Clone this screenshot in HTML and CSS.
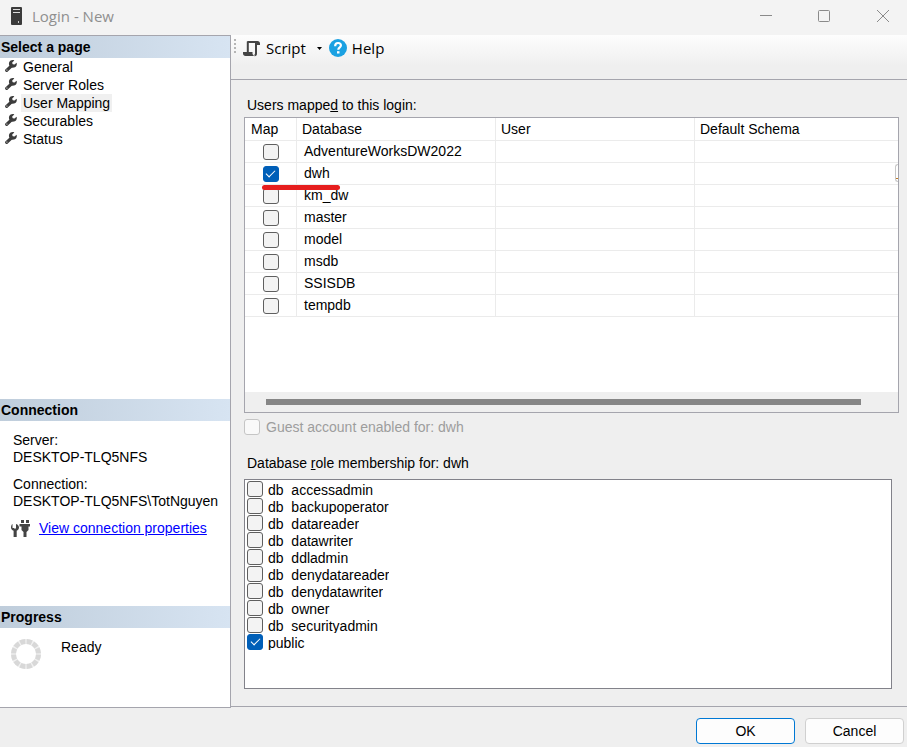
FILE: index.html
```html
<!DOCTYPE html>
<html lang="en">
<head>
<meta charset="utf-8">
<title>Login - New</title>
<link rel="stylesheet" href="styles.css">
</head>
<body>
<svg class="defs" width="0" height="0" aria-hidden="true">
  <symbol id="wrench" viewBox="0 0 12 12">
    <path d="M1.700 10.300 6.500 5.800" stroke="#3c3c3c" stroke-width="3.200" stroke-linecap="round"/>
    <path fill="#3c3c3c" d="M11.600 2.800 9.500 4.600 7.600 4.200 7.200 2.500 9.300.4C7.300-.4 5 .5 4.200 2.300 3.600 4 4 5.700 5.200 6.800c1.200 1.100 3.200 1.300 4.700.5 1.600-.9 2.300-2.900 1.700-4.500z"/>
    <circle cx="1.900" cy="10" r=".6" fill="#fff"/>
  </symbol>
</svg>
<div class="window">
  <header class="titlebar">
    <svg class="server" width="11" height="18" viewBox="0 0 11 18" aria-hidden="true">
      <rect width="11" height="18" rx="1" fill="#3b3b3b"/>
      <path d="M2 2.500h7M2 5.500h7" stroke="#ddd"/>
      <rect x="7" y="14" width="1" height="2" fill="#ccc"/>
    </svg>
    <h1>Login - New</h1>
    <div class="winbuttons">
      <button type="button" aria-label="Minimize"><svg width="14" height="14" viewBox="0 0 14 14"><path d="M1 6.500h12"/></svg></button>
      <button type="button" aria-label="Maximize"><svg width="14" height="14" viewBox="0 0 14 14"><rect x="1.500" y="1.500" width="11" height="11" rx="1"/></svg></button>
      <button type="button" aria-label="Close"><svg width="14" height="14" viewBox="0 0 14 14"><path d="M2 1l12 12M14 1 2 13"/></svg></button>
    </div>
  </header>
  <div class="body">
    <aside class="side">
      <section class="pages">
        <h2>Select a page</h2>
        <nav>
          <a href="#general"><svg width="12" height="12"><use href="#wrench"/></svg><span>General</span></a>
          <a href="#roles"><svg width="12" height="12"><use href="#wrench"/></svg><span>Server Roles</span></a>
          <a href="#mapping" aria-current="page"><svg width="12" height="12"><use href="#wrench"/></svg><span>User Mapping</span></a>
          <a href="#securables"><svg width="12" height="12"><use href="#wrench"/></svg><span>Securables</span></a>
          <a href="#status"><svg width="12" height="12"><use href="#wrench"/></svg><span>Status</span></a>
        </nav>
      </section>
      <section class="connection">
        <h2>Connection</h2>
        <dl>
          <dt>Server:</dt><dd>DESKTOP-TLQ5NFS</dd>
          <dt>Connection:</dt><dd>DESKTOP-TLQ5NFS\TotNguyen</dd>
        </dl>
        <div class="props">
          <svg width="19" height="18" viewBox="0 0 19 18" aria-hidden="true">
            <path fill="#444" d="M1.500 4v4h1.500l1 1 1-1V4C7 4.500 8 6 8 7.500c0 1.500-1 2.700-2.300 3.300V17H2.600v-6.200C1 10.200 0 9 0 7.500 0 6 .5 4.600 1.500 4zM10 0h3v3h-3zM15 0h3v3h-3zM8.500 4H19v2.500h-1.500V10L15.500 12v5h-3v-5L10.500 10V6.500h-2z"/>
          </svg>
          <a href="#properties">View connection properties</a>
        </div>
      </section>
      <section class="progress">
        <h2>Progress</h2>
        <div class="state">
          <svg width="30" height="30" viewBox="0 0 30 30" aria-hidden="true">
            <circle cx="15" cy="15" r="12.500" fill="none" stroke="#f1f1f1" stroke-width="5"/>
            <circle cx="15" cy="15" r="12.500" fill="none" stroke="#d8d8d8" stroke-width="5" pathLength="120" stroke-dasharray="8 2" stroke-dashoffset="-1"/>
          </svg>
          <span>Ready</span>
        </div>
      </section>
    </aside>
    <main>
      <div class="toolbar">
        <span class="grip"></span>
        <button type="button" class="script">
          <svg width="17" height="17" viewBox="0 0 17 17" aria-hidden="true">
            <path d="M4 1h10.500C16 1 17 2 17 3.500V5h-3V3.500L12.500 3H5.500z" fill="#444"/>
            <path d="M4.800 1.500V12M13 3v10.500c0 1-.6 1.800-1.500 1.800" fill="none" stroke="#444" stroke-width="2"/>
            <path d="M0 12h9.500v2l1.500 2H2.500C1 16 0 15 0 13.500z" fill="#444"/>
          </svg>
          <span>Script</span>
          <svg class="arrow" width="5" height="3" viewBox="0 0 5 3" aria-hidden="true"><path d="M0 0h5L2.500 3z"/></svg>
        </button>
        <button type="button" class="help">
          <svg width="18" height="18" viewBox="0 0 18 18" aria-hidden="true">
            <circle cx="9" cy="9" r="9" fill="#1ba1e2"/>
            <path d="M6.200 7.200V6.800C6.200 5 7.300 4 9 4s2.900 1 2.900 2.500C11.900 8.300 9.300 8.400 9.300 10.800" fill="none" stroke="#fff" stroke-width="2.200"/>
            <rect x="8" y="12.200" width="2.500" height="2.300" fill="#fff"/>
          </svg>
          <span>Help</span>
        </button>
      </div>
      <div class="content">
        <p class="caption">Users mappe<u>d</u> to this login:</p>
        <div class="grid">
          <table>
            <colgroup><col class="c-map"><col class="c-name"><col class="c-name"><col></colgroup>
            <thead><tr><th>Map</th><th>Database</th><th>User</th><th>Default Schema</th></tr></thead>
            <tbody>
              <tr><td><input type="checkbox" id="m1"></td><td><label for="m1">AdventureWorksDW2022</label></td><td></td><td></td></tr>
              <tr class="marked"><td><input type="checkbox" id="m2" checked><span class="marker"></span></td><td><label for="m2">dwh</label></td><td></td><td><button type="button" class="browse" aria-label="Browse"></button></td></tr>
              <tr><td><input type="checkbox" id="m3"></td><td><label for="m3">km_dw</label></td><td></td><td></td></tr>
              <tr><td><input type="checkbox" id="m4"></td><td><label for="m4">master</label></td><td></td><td></td></tr>
              <tr><td><input type="checkbox" id="m5"></td><td><label for="m5">model</label></td><td></td><td></td></tr>
              <tr><td><input type="checkbox" id="m6"></td><td><label for="m6">msdb</label></td><td></td><td></td></tr>
              <tr><td><input type="checkbox" id="m7"></td><td><label for="m7">SSISDB</label></td><td></td><td></td></tr>
              <tr><td><input type="checkbox" id="m8"></td><td><label for="m8">tempdb</label></td><td></td><td></td></tr>
            </tbody>
          </table>
          <div class="scroll"><div class="thumb"></div></div>
        </div>
        <div class="guest"><input type="checkbox" id="guest" disabled><label for="guest">Guest account enabled for: dwh</label></div>
        <p class="caption">Database <u>r</u>ole membership for: dwh</p>
        <ul class="roles">
          <li><input type="checkbox" id="r1"><label for="r1">db_accessadmin</label></li>
          <li><input type="checkbox" id="r2"><label for="r2">db_backupoperator</label></li>
          <li><input type="checkbox" id="r3"><label for="r3">db_datareader</label></li>
          <li><input type="checkbox" id="r4"><label for="r4">db_datawriter</label></li>
          <li><input type="checkbox" id="r5"><label for="r5">db_ddladmin</label></li>
          <li><input type="checkbox" id="r6"><label for="r6">db_denydatareader</label></li>
          <li><input type="checkbox" id="r7"><label for="r7">db_denydatawriter</label></li>
          <li><input type="checkbox" id="r8"><label for="r8">db_owner</label></li>
          <li><input type="checkbox" id="r9"><label for="r9">db_securityadmin</label></li>
          <li><input type="checkbox" id="r10" checked><label for="r10">public</label></li>
        </ul>
      </div>
    </main>
  </div>
  <footer>
    <button type="button" class="primary">OK</button>
    <button type="button">Cancel</button>
  </footer>
</div>
</body>
</html>
```
FILE: styles.css
```css
* { box-sizing: border-box; }

body {
  margin: 0;
  background: #efefef;
  color: #000;
  font: 14px/17px "Liberation Sans", Arial, sans-serif;
}

h1, h2, p, ul, dl, dd { margin: 0; padding: 0; }

button {
  padding: 0;
  border: 0;
  background: none;
  color: inherit;
  font: inherit;
}

.defs { position: absolute; }

.window {
  display: flex;
  flex-direction: column;
  min-height: 100vh;
}

/* Title bar */
.titlebar {
  display: flex;
  align-items: center;
  height: 35px;
  padding: 0 18px 3px 11px;
  background: #f3f3f3;
}

.titlebar h1 {
  flex: 1;
  margin-left: 10px;
  color: #8f8f8f;
  font: 15px/20px "Open Sans", sans-serif;
}

.winbuttons { display: flex; gap: 44px; }
.winbuttons button { display: flex; width: 14px; }
.winbuttons svg { fill: none; stroke: #8a8a8a; overflow: visible; }

.body { display: flex; flex: 1; }

/* Left pane */
.side {
  display: flex;
  flex-direction: column;
  flex: none;
  width: 231px;
  border: solid #a5a5ad;
  border-width: 1px 1px 1px 0;
  background: #fff;
}

.side h2 {
  height: 22px;
  padding-left: 1px;
  background: linear-gradient(90deg, #bfcddb, #d7e4f2);
  font-size: 14px;
  line-height: 23px;
}

.pages { flex: 1; }
.connection { min-height: 207px; }
.progress { min-height: 101px; }

.side nav a {
  display: flex;
  align-items: center;
  gap: 4px;
  height: 18px;
  padding-left: 5px;
  color: inherit;
  text-decoration: none;
}

.side nav svg { margin-bottom: 2px; }
.side nav span { padding: 1px 2px 0; }
.side nav [aria-current] span { background: #f0f0f0; }

.connection dl { padding: 11px 0 0 13px; }
.connection dd { margin-bottom: 10px; }

.props { display: flex; gap: 9px; padding-left: 11px; }
.props a { color: #00f; }

.state { display: flex; gap: 20px; padding: 11px; }

/* Toolbar */
main {
  display: flex;
  flex-direction: column;
  flex: 1;
  min-width: 0;
  margin-bottom: 1px;
  border-bottom: 1px solid #a5a5ad;
}

.toolbar {
  display: flex;
  align-items: flex-start;
  height: 45px;
  padding: 3px 3px 0;
  border-bottom: 1px solid #a5a5ad;
  background: linear-gradient(#fdfdfd, #efefef 70%);
  font: 15px/20px "Open Sans", sans-serif;
}

.toolbar button { display: flex; align-items: center; height: 20px; }

.grip {
  width: 2px;
  height: 15px;
  margin-top: 1px;
  background: repeating-linear-gradient(#b5b5b5 0 2px, transparent 2px 4px);
}

.script { margin-left: 7px; }
.script span { margin: 0 11px 0 6px; }
.help { margin-left: 7px; }
.help span { margin-left: 5px; }

/* Form */
.content {
  display: flex;
  flex-direction: column;
  flex: 1;
  padding: 17px 8px 17px 13px;
}

.caption { padding-left: 3px; }

input {
  appearance: none;
  display: block;
  flex: none;
  width: 16px;
  height: 16px;
  margin: 0;
  border: 1px solid #5f5f5f;
  border-radius: 3px;
  background: #f3f3f3;
}

input:checked {
  display: grid;
  place-items: center;
  border-color: #005fb8;
  background: #005fb8;
}

input:checked::after {
  content: "";
  width: 8px;
  height: 4px;
  margin-bottom: 3px;
  border: solid #fff;
  border-width: 0 0 1px 1px;
  transform: rotate(-45deg);
}

input:disabled { border-color: #c5c5c5; background: #f9f9f9; }

.grid {
  display: flex;
  flex-direction: column;
  flex: 1;
  margin-top: 3px;
  border: 1px solid #a5a5ad;
  background: #fff;
}

table { width: 100%; border-collapse: separate; border-spacing: 0; table-layout: fixed; }
.c-map { width: 52px; }
.c-name { width: 199px; }

th, td {
  height: 22px;
  padding: 0 7px;
  border: solid #ebebeb;
  border-width: 0 1px 1px 0;
  text-align: left;
  font-weight: normal;
}

th { height: 23px; padding-left: 5px; }
th:first-child { padding-left: 6px; }
td:first-child { padding: 1px 0 0; }
td:first-child input { margin: 0 auto; }
th:last-child, td:last-child { border-right: 0; }

.marked { position: relative; }

.marker {
  position: absolute;
  top: 22px;
  left: 17px;
  width: 78px;
  height: 5px;
  border-radius: 3px;
  background: #e61e1e;
}

.browse {
  position: absolute;
  top: 1px;
  right: 0;
  width: 3px;
  height: 18px;
  border: 1px solid #c8c8c8;
  border-right: 0;
  border-radius: 3px 0 0 3px;
  background: linear-gradient(transparent 13px, #c07a20 13px 14px, transparent 14px);
}

.scroll {
  height: 20px;
  margin-top: auto;
  padding: 7px 37px 7px 21px;
  background: #efefef;
}

.thumb { height: 6px; background: #868686; }

.guest {
  display: flex;
  gap: 6px;
  margin: 6px 0 19px;
  color: #9d9d9d;
}

.roles {
  min-height: 210px;
  margin: 7px 7px 0 0;
  padding: 1px 2px;
  border: 1px solid #82828a;
  background: #fff;
  list-style: none;
}

.roles li { display: flex; gap: 5px; height: 17px; }

.roles label { height: 16px; line-height: 19px; overflow: hidden; }

/* Action buttons */
footer {
  display: flex;
  justify-content: flex-end;
  gap: 10px;
  padding: 10px 3px 3px;
}

footer button {
  width: 99px;
  height: 26px;
  border: 1px solid #d0d0d0;
  border-radius: 4px;
  background: #fdfdfd;
}

footer .primary { border-color: #0078d4; }
```
